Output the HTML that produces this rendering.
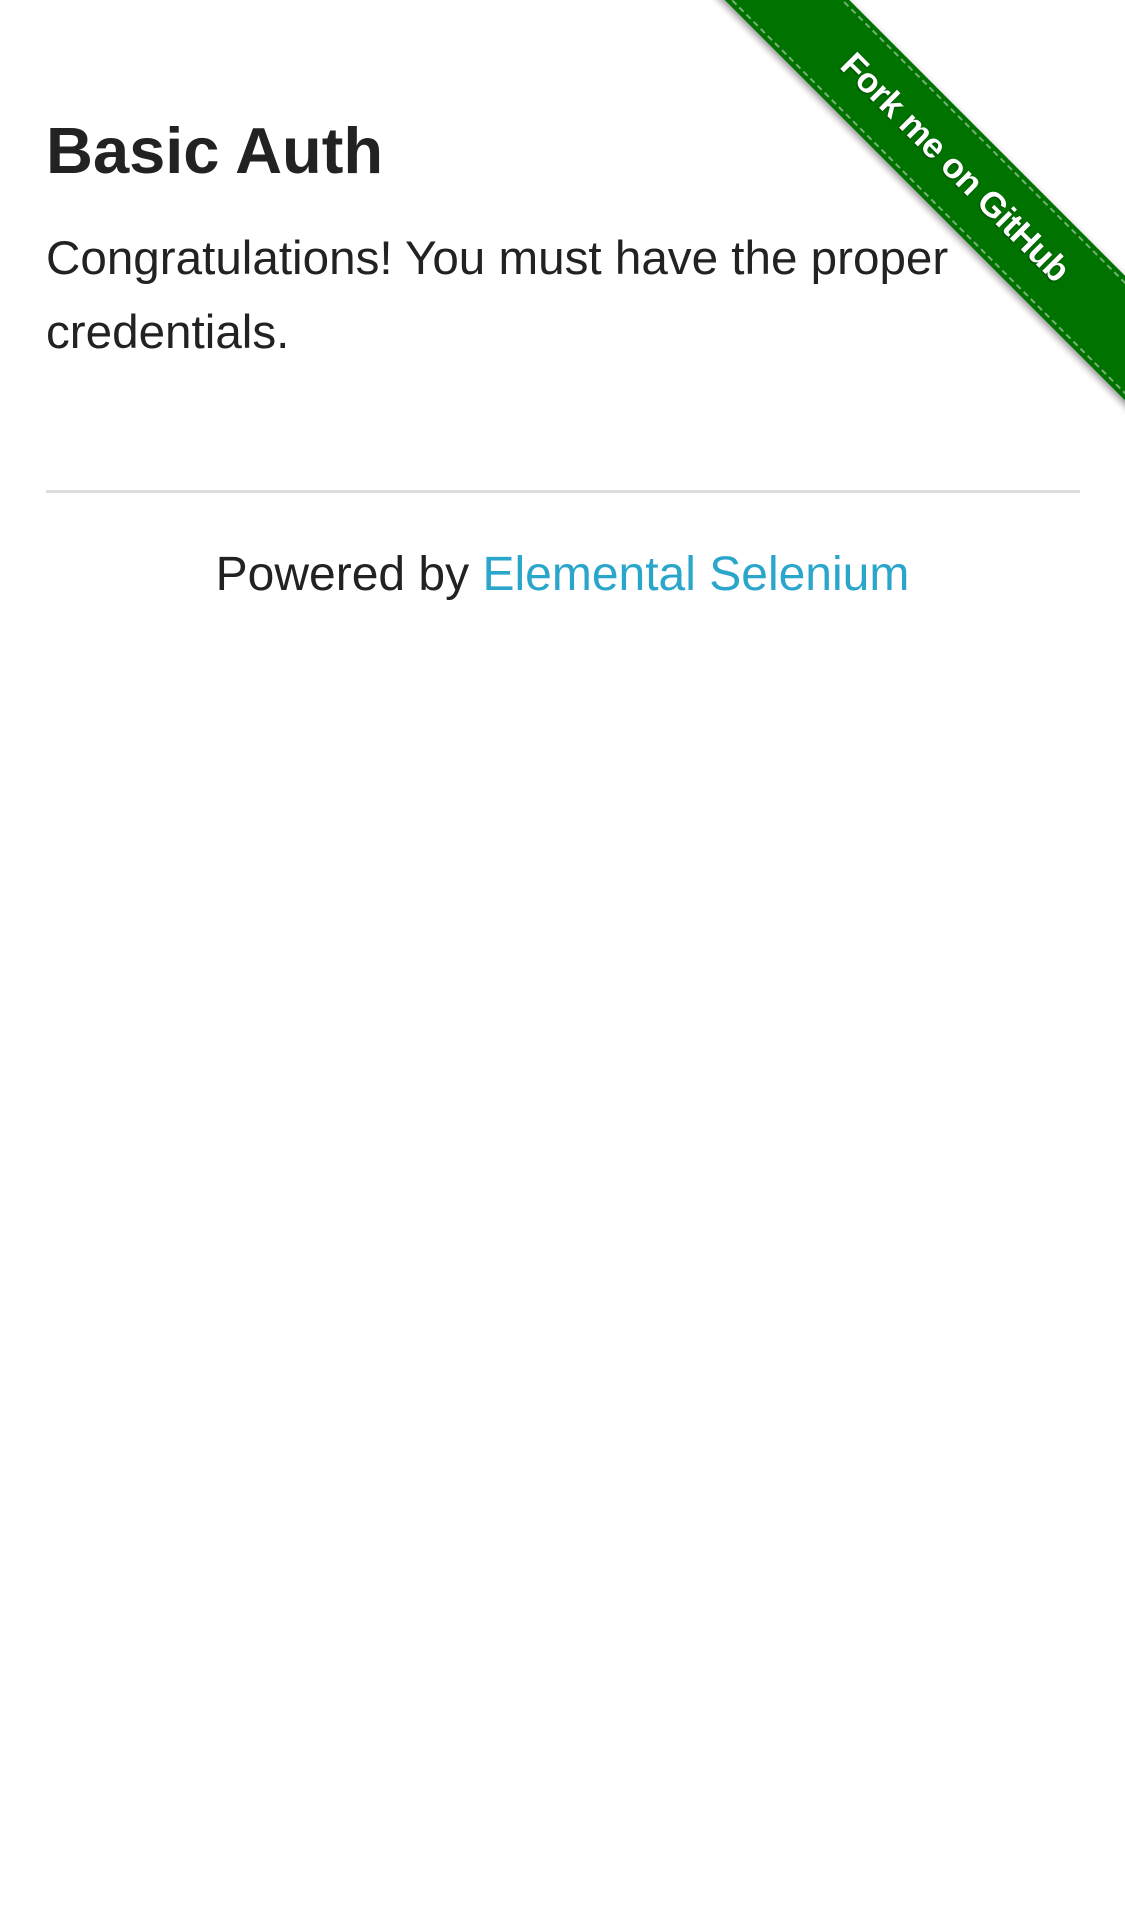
<!DOCTYPE html>
<html><head><meta charset="utf-8"><style>
html,body{margin:0;padding:0;background:#fff;width:1125px;height:1905px;overflow:hidden;position:relative;font-family:"Liberation Sans",Arial,sans-serif;color:#222;}
h3{position:absolute;left:46px;top:106px;margin:0;font-size:65px;font-weight:bold;line-height:90px;}
p.msg{position:absolute;left:46px;top:222px;margin:0;font-size:47.6px;line-height:74px;width:980px;}
.hr{position:absolute;left:46px;top:490px;width:1034px;height:3px;background:#ddd;}
.foot{position:absolute;left:0;width:1125px;top:540px;text-align:center;font-size:48px;line-height:70px;}
.foot span{color:#2ba6cb;}
.rib{position:absolute;left:600px;top:169px;width:800px;height:88px;background:#007200;transform:rotate(45deg);box-shadow:0 3px 8px rgba(0,0,0,.45);}
.rib:before,.rib:after{content:"";position:absolute;left:0;right:0;height:0;border-top:2px dashed rgba(255,255,255,.45);}
.rib:before{top:4px}.rib:after{bottom:4px}
.rib div{position:absolute;left:0;right:0;top:0;height:88px;line-height:88px;text-align:center;color:#fff;font-weight:bold;font-size:35px;letter-spacing:-0.5px;transform:translateX(-64px);text-shadow:0 1px 2px rgba(0,0,0,.4);}
</style></head><body>
<h3>Basic Auth</h3>
<p class="msg">Congratulations! You must have the proper credentials.</p>
<div class="hr"></div>
<div class="foot">Powered by <span>Elemental Selenium</span></div>
<div class="rib"><div>Fork me on GitHub</div></div>
</body></html>
